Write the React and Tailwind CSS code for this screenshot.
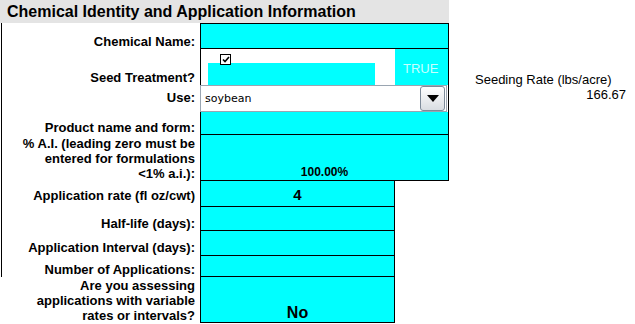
const cyan = "bg-[#00ffff]";
const label =
  "ml-px w-[199px] border-l border-black flex flex-col items-end justify-end pr-[5px] text-right text-[13px] font-bold leading-[15px] text-black";

function Row({ text, lines, h, pb = "", cell, noLine }) {
  return (
    <div className={`flex ${h}`}>
      <div className={`${label} ${pb} ${noLine ? "border-l-0 ml-[2px] w-[198px]" : ""}`}>
        {lines ? lines.map((l) => <div key={l}>{l}</div>) : <div>{text}</div>}
      </div>
      {cell}
    </div>
  );
}

function Dropdown() {
  return (
    <div className="w-[249px] h-full border-r border-black">
      <div className="w-[247px] h-full bg-white border border-[#9aa5b1] flex items-center justify-between">
        <span className="pl-[4px] pt-[2px] text-[11px] font-['DejaVu_Sans',Tahoma,sans-serif] text-black">
          soybean
        </span>
        <div className="mr-px w-[25px] h-[25px] rounded-[3px] border border-[#7d8a99] bg-gradient-to-b from-white to-[#d9dde2] flex items-center justify-center">
          <svg width="12" height="7" viewBox="0 0 12 7">
            <polygon points="0,0 12,0 6,7" fill="#000" />
          </svg>
        </div>
      </div>
    </div>
  );
}

export default function App() {
  const wide = `w-[249px] border-x border-b border-black ${cyan}`;
  const narrow = `w-[195px] border-x border-b border-black ${cyan}`;
  return (
    <div className="w-[635px] h-[324px] bg-white flex font-['Liberation_Sans',Arial,sans-serif] text-black overflow-hidden">
      <div className="w-[449px] flex flex-col">
        <div className="h-[23px] bg-[#e4e4e4] pl-[7px] text-[16px] font-bold leading-[23px]">
          Chemical Identity and Application Information
        </div>
        <Row text="Chemical Name:" h="h-[26px]" cell={<div className={`${wide} border-t`} />} />
        <Row
          text="Seed Treatment?"
          h="h-[36px]"
          cell={
            <div className="w-[249px] border-x border-black bg-white flex">
              <div className="relative pl-[7px] flex flex-col">
                <div className="absolute left-[19px] top-[5px] w-[11px] h-[11px] bg-white border border-black flex items-center justify-center">
                  <svg width="8" height="7" viewBox="0 0 8 7">
                    <path d="M1 3.5 L3 5.5 L7 1" stroke="#000" strokeWidth="1.6" fill="none" />
                  </svg>
                </div>
                <div className={`mt-auto w-[167px] h-[22px] ${cyan}`} />
              </div>
              <div className={`ml-[20px] w-[53px] h-full ${cyan} pt-[12px] pl-[8px] text-[13px] leading-[15px] text-[#c8ffff]`}>
                TRUE
              </div>
            </div>
          }
        />
        <Row text="Use:" h="h-[27px]" pb="pb-[7px]" cell={<Dropdown />} />
        <Row text="Product name and form:" h="h-[23px]" cell={<div className={wide} />} />
        <Row
          lines={["% A.I. (leading zero must be", "entered for formulations", "<1% a.i.):"]}
          h="h-[46px]"
          cell={
            <div className={`${wide} flex items-end justify-center text-[12px] font-bold leading-[15px]`}>
              100.00%
            </div>
          }
        />
        <Row
          text="Application rate (fl oz/cwt)"
          h="h-[26px]"
          pb="pb-[4px]"
          cell={
            <div className={`${narrow} flex items-end justify-center pb-[3px] text-[15px] font-bold leading-[16px]`}>
              4
            </div>
          }
        />
        <Row text="Half-life (days):" h="h-[24px]" cell={<div className={narrow} />} />
        <Row text="Application Interval (days):" h="h-[25px]" pb="pb-[1px]" cell={<div className={narrow} />} />
        <Row text="Number of Applications:" h="h-[21px]" cell={<div className={narrow} />} />
        <Row
          lines={["Are you assessing", "applications with variable", "rates or intervals?"]}
          h="h-[46px]"
          noLine
          cell={
            <div className={`${narrow} flex items-end justify-center text-[16px] font-bold leading-[18px]`}>
              No
            </div>
          }
        />
      </div>
      <div className="flex-1 pt-[72px] text-[13px] leading-[15px]">
        <div className="pl-[26px]">Seeding Rate (lbs/acre)</div>
        <div className="text-right pr-[9px]">166.67</div>
      </div>
    </div>
  );
}
